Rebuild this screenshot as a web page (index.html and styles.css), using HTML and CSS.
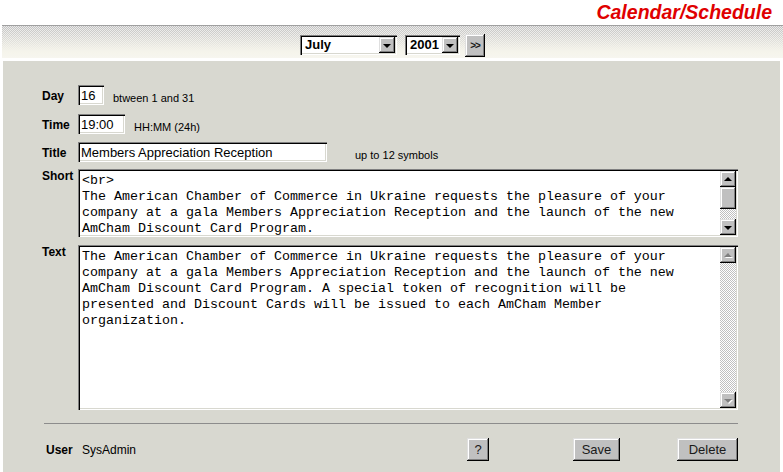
FILE: index.html
```html
<!DOCTYPE html>
<html>
<head>
<meta charset="utf-8">
<title>Calendar/Schedule</title>
<link rel="stylesheet" href="styles.css">
</head>
<body>
<div class="topbar"><span class="title">Calendar/Schedule</span></div>
<div class="rule"></div>
<div class="band">
  <div class="select sel-month"><span class="val">July</span><span class="drop"><i class="tri tri-down"></i></span></div>
  <div class="select sel-year"><span class="val">2001</span><span class="drop"><i class="tri tri-down"></i></span></div>
  <button class="btn btn-go">&gt;&gt;</button>
</div>
<div class="panel">
  <div class="row r-day">
    <span class="lbl">Day</span>
    <input class="inp w-day" type="text" value="16">
    <span class="hint h-day">btween 1 and 31</span>
  </div>
  <div class="row r-time">
    <span class="lbl">Time</span>
    <input class="inp w-time" type="text" value="19:00">
    <span class="hint h-time">HH:MM (24h)</span>
  </div>
  <div class="row r-title">
    <span class="lbl">Title</span>
    <input class="inp w-title" type="text" value="Members Appreciation Reception">
    <span class="hint h-title">up to 12 symbols</span>
  </div>
  <div class="row r-short">
    <span class="lbl lbl-top">Short</span>
    <div class="ta ta-short">
      <textarea class="ta-text">&lt;br&gt;
The American Chamber of Commerce in Ukraine requests the pleasure of your
company at a gala Members Appreciation Reception and the launch of the new
AmCham Discount Card Program.</textarea>
      <div class="sb">
        <span class="sb-btn"><i class="tri tri-up"></i></span>
        <span class="sb-thumb"></span>
        <span class="sb-track"></span>
        <span class="sb-btn"><i class="tri tri-down"></i></span>
      </div>
    </div>
  </div>
  <div class="row r-text">
    <span class="lbl lbl-top">Text</span>
    <div class="ta ta-long">
      <textarea class="ta-text">The American Chamber of Commerce in Ukraine requests the pleasure of your
company at a gala Members Appreciation Reception and the launch of the new
AmCham Discount Card Program. A special token of recognition will be
presented and Discount Cards will be issued to each AmCham Member
organization.</textarea>
      <div class="sb">
        <span class="sb-btn"><i class="tri tri-up tri-off"></i></span>
        <span class="sb-track"></span>
        <span class="sb-btn"><i class="tri tri-down tri-off"></i></span>
      </div>
    </div>
  </div>
  <div class="sep"></div>
  <div class="footer">
    <span class="flbl">User</span>
    <span class="fval">SysAdmin</span>
    <button class="btn b-help">?</button>
    <button class="btn b-save">Save</button>
    <button class="btn b-del">Delete</button>
  </div>
</div>
</body>
</html>
```
FILE: styles.css
```css
* { box-sizing: border-box; }

body {
  margin: 0;
  width: 783px;
  height: 472px;
  overflow: hidden;
  background: #fff;
  font-family: "Liberation Sans", Arial, sans-serif;
  color: #000;
}

.topbar {
  height: 25px;
  display: flex;
  justify-content: flex-end;
  align-items: center;
  padding-right: 11px;
}

.title {
  font-size: 19.5px;
  line-height: 25px;
  font-weight: bold;
  font-style: italic;
  color: #e00000;
}

.rule {
  height: 1px;
  margin-left: 2px;
  background: #a0a0a0;
}

.band {
  height: 32px;
  margin-left: 2px;
  padding-top: 6px;
  display: flex;
  justify-content: center;
  align-items: center;
  background:
    linear-gradient(to bottom, rgba(246,245,236,0) 0%, rgba(246,245,236,0.5) 40%, #f5f4eb 78%, #f7f6ef 100%),
    repeating-conic-gradient(#c0c0c0 0 25%, #eaeaea 0 50%) 0 0 / 2px 2px;
}

/* sunken field look */
.select, .inp, .ta {
  background: #fff;
  box-shadow: inset 1px 1px #808080, inset 2px 2px #000, inset -1px -1px #fff, inset -2px -2px #d8d8d0;
}

.select {
  height: 20px;
  padding: 2px;
  display: flex;
}
.sel-month { width: 97px; }
.sel-year { width: 55px; margin-left: 8px; }

.val {
  flex: 1;
  padding-left: 3px;
  font-size: 13px;
  font-weight: bold;
  line-height: 16px;
}

.drop, .sb-btn, .sb-thumb, .btn {
  background: #c0c0c0;
  box-shadow: inset -1px -1px #000, inset 1px 1px #dfdfdf, inset -2px -2px #808080, inset 2px 2px #fff;
}

.drop {
  width: 16px;
  height: 16px;
  display: flex;
  align-items: center;
  justify-content: center;
}

.tri {
  display: block;
  width: 0;
  height: 0;
  border-left: 4px solid transparent;
  border-right: 4px solid transparent;
}
.tri-down { border-top: 4px solid #000; margin-top: 1px; }
.tri-up { border-bottom: 4px solid #000; margin-top: -1px; }
.tri-off.tri-down { border-top-color: #808080; }
.tri-off.tri-up { border-bottom-color: #808080; }
.tri-off { filter: drop-shadow(1px 1px 0 #fff); }

.btn {
  border: 0;
  padding: 0;
  height: 23px;
  font-family: "Liberation Sans", Arial, sans-serif;
  font-size: 13px;
  color: #1a1a1a;
}

.btn-go {
  width: 20px;
  margin-left: 5px;
  font-size: 10px;
  font-weight: bold;
  letter-spacing: -1px;
}

.panel {
  margin: 3px 3px 0 3px;
  height: 411px;
  padding: 24px 42px 0 39px;
  background: #d8d8d0;
}

.row {
  display: flex;
  align-items: center;
}
.r-time { margin-top: 9px; }
.r-title { margin-top: 8px; }
.r-short { margin-top: 7px; align-items: flex-start; }
.r-text { margin-top: 8px; align-items: flex-start; }

.lbl {
  width: 36px;
  flex: none;
  font-size: 12px;
  font-weight: bold;
  margin-top: 1px;
}
.lbl-top { margin-top: 0; }

.inp {
  height: 20px;
  border: 0;
  padding: 1px 0 0 3px;
  outline: none;
  font-family: "Liberation Sans", Arial, sans-serif;
  font-size: 13px;
  color: #000;
}
.w-day { width: 26px; }
.w-time { width: 47px; }
.w-title { width: 249px; }

.hint {
  font-size: 11px;
  margin-left: 9px;
  margin-top: 6px;
}
.h-title { margin-left: 28px; margin-top: 5px; }

.ta {
  flex: 1;
  display: flex;
  padding: 2px;
}
.ta-short { height: 68px; }
.ta-long { height: 165px; }

.ta-text {
  flex: 1;
  border: 0;
  outline: none;
  resize: none;
  overflow: hidden;
  padding: 2px 2px 0;
  background: transparent;
  font-family: "Liberation Mono", "Courier New", monospace;
  font-size: 13.333px;
  line-height: 16px;
  color: #000;
  white-space: pre-wrap;
}

.sb {
  width: 16px;
  display: flex;
  flex-direction: column;
}
.sb-btn {
  height: 16px;
  flex: none;
  display: flex;
  align-items: center;
  justify-content: center;
}
.sb-thumb {
  height: 22px;
  flex: none;
}
.sb-track {
  flex: 1;
  background: repeating-conic-gradient(#c0c0c0 0 25%, #fff 0 50%) 0 0 / 2px 2px;
}

.sep {
  height: 1px;
  margin: 13px 0 0 2px;
  background: #8c8c8c;
}

.footer {
  display: flex;
  align-items: center;
  height: 23px;
  margin-top: 14px;
  padding-left: 4px;
}
.flbl {
  width: 36px;
  font-size: 12px;
  font-weight: bold;
}
.fval {
  font-size: 12px;
}
.b-help { width: 22px; margin-left: auto; }
.b-save { width: 47px; margin-left: 84px; }
.b-del { width: 61px; margin-left: 57px; }
```
